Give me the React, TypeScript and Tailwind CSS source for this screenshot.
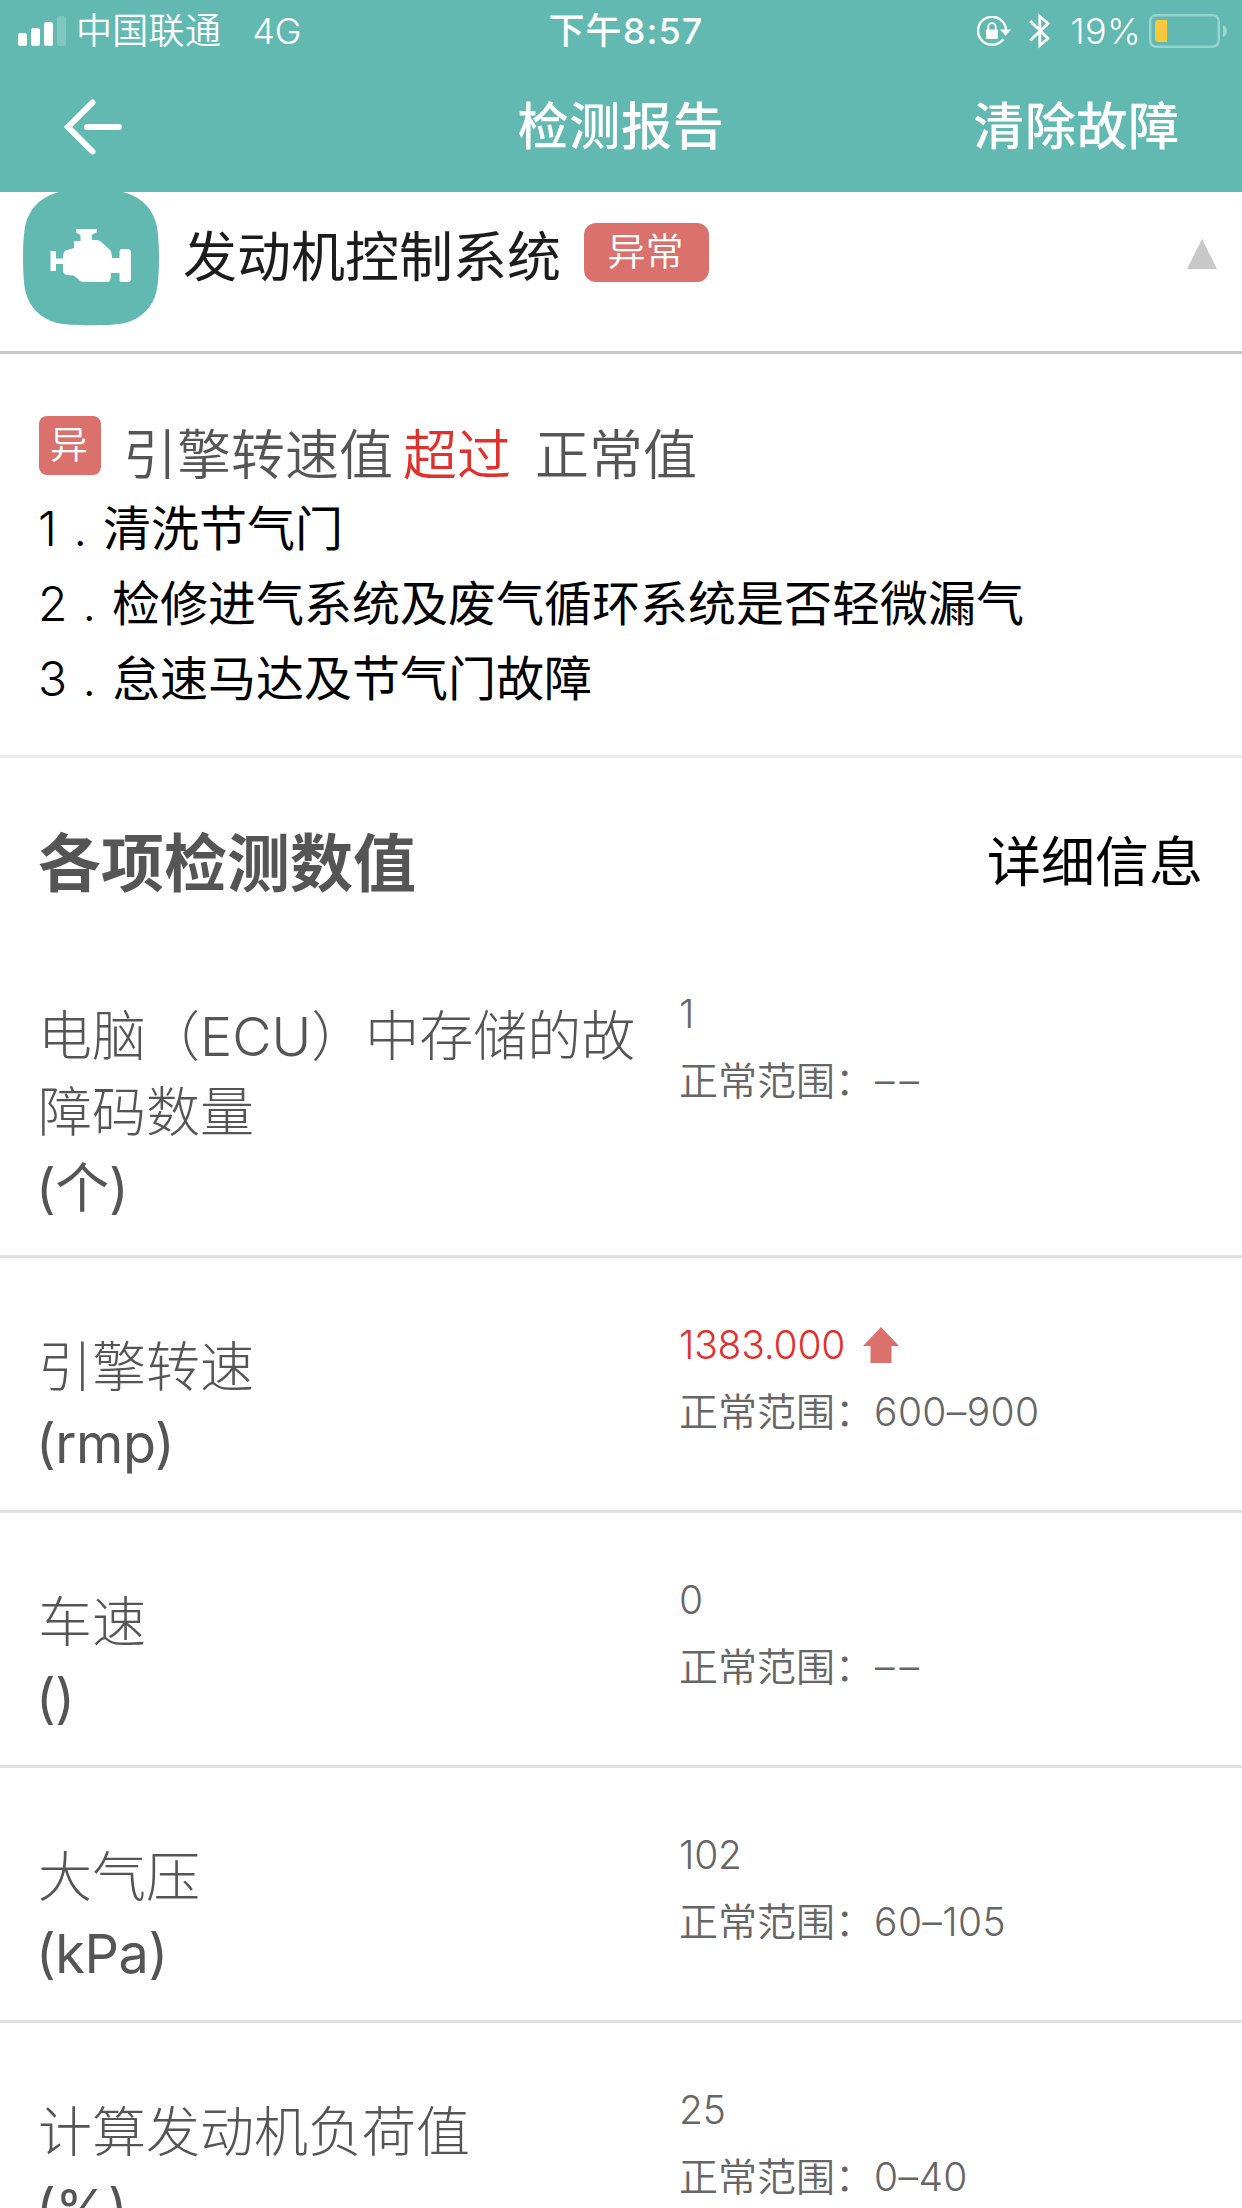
import React from "react";

type Reading = {
  name: string;
  unit: string;
  value: string;
  range: string;
  high?: boolean;
};

const readings: Reading[] = [
  { name: "电脑（ECU）中存储的故障码数量", unit: "(个)", value: "1", range: "––" },
  { name: "引擎转速", unit: "(rmp)", value: "1383.000", range: "600–900", high: true },
  { name: "车速", unit: "()", value: "0", range: "––" },
  { name: "大气压", unit: "(kPa)", value: "102", range: "60–105" },
  { name: "计算发动机负荷值", unit: "(%)", value: "25", range: "0–40" },
];

const advice = [
  { no: "1", text: "清洗节气门", pad: "w-[65px]" },
  { no: "2", text: "检修进气系统及废气循环系统是否轻微漏气", pad: "w-[74px]" },
  { no: "3", text: "怠速马达及节气门故障", pad: "w-[74px]" },
];

function SignalBars() {
  return (
    <svg className="h-[30px] w-12" viewBox="0 0 48 30" fill="#fff">
      <rect x="0" y="17" width="9" height="13" rx="2.5" />
      <rect x="13" y="12" width="9" height="18" rx="2.5" />
      <rect x="26" y="6" width="9" height="24" rx="2.5" />
      <rect x="39" y="0" width="9" height="30" rx="2.5" opacity="0.2" />
    </svg>
  );
}

function RotationLock() {
  return (
    <svg className="h-[30px] w-[34px]" viewBox="0 0 34 30" fill="none">
      <path d="M26.2 23.2A14 14 0 1 1 29 15" stroke="#fff" strokeWidth="2.4" />
      <path d="M23 13.5h11l-5.4 6.2z" fill="#fff" />
      <rect x="9" y="13.5" width="12" height="9.5" rx="1" fill="#fff" />
      <path d="M11.3 14v-3.2a3.7 3.7 0 0 1 7.4 0V14" stroke="#fff" strokeWidth="1.8" />
    </svg>
  );
}

function Bluetooth() {
  return (
    <svg className="h-9 w-[22px]" viewBox="0 0 22 36" fill="none" stroke="#fff" strokeWidth="2.8">
      <path d="M1.200 8 19 25.500 10.800 32.500V3.500L19 10.500 1.200 27.500" />
    </svg>
  );
}

function Battery() {
  return (
    <svg className="h-[34px] w-[78px]" viewBox="0 0 78 34" fill="none">
      <rect x="1.25" y="1.25" width="68.5" height="31.5" rx="6" stroke="#fff" strokeOpacity="0.36" strokeWidth="2.5" />
      <path d="M12 6H9a3 3 0 0 0-3 3v16a3 3 0 0 0 3 3h9V6z" fill="#f9c83c" />
      <path d="M74 11.2c5.2 1.800 5.2 10 0 11.800z" fill="#fff" fillOpacity="0.4" />
    </svg>
  );
}

function EngineIcon() {
  return (
    <svg className="h-[138px] w-[138px]" viewBox="0 0 138 138">
      <path
        d="M35 3.500C46 .500 92 .500 103 3.500c17 5 28 17 31.500 32 3.300 14 3.300 53 0 67-3.500 15-14.500 27-31.500 31.500-11 3-57 3-68 0C18 129.500 7 117.500 3.500 102.500c-3.300-14-3.300-53 0-67C7 20.500 18 8.500 35 3.500Z"
        fill="#61b9b1"
      />
      <path
        d="M54 40H75V43L70 46V51H75Q78 51 80 53.500L88 61Q90 63 90 69H97.500V63Q97.500 60 100 60H106Q109 60.500 109 63V90Q109 93 106 93H99.500Q97.500 93 97.500 91V84H89Q89 93 86 93H61Q58 93 56 90L51.500 86.500 45 86Q41 85 41 82V75H34V82H28.500V62H34V69.500H41Q41 63 43.500 61.500L52 59V52H58.500V46L54 43.500Z"
        fill="#fff"
      />
    </svg>
  );
}

function ReadingRow({ name, unit, value, range, high }: Reading) {
  return (
    <div className="flex border-b-[3px] border-[#e2e2e2] pl-[38px]">
      <div className="w-[641px] shrink-0 pt-[72px] pb-[28px] text-[54px] leading-[76px] text-[#555]">
        <p className="w-[610px] font-light">{name}</p>
        <p className="-ml-[2px] tracking-[-0.4px]">{unit}</p>
      </div>
      <div className="pt-[53px] text-[39px] leading-[67px] font-[350] text-[#666]">
        <div className="flex items-center">
          <span className={high ? "tracking-[-0.2px] text-[#e0322c]" : "tracking-[-0.2px]"}>{value}</span>
          {high && (
            <svg className="mt-px ml-[18px] h-[36px] w-[36px]" viewBox="0 0 36 36" fill="#da716d">
              <path d="M18 0 36 19H28.500V36H7.500V19H0Z" />
            </svg>
          )}
        </div>
        <p>
          正常范围：
          <span className={range === "––" ? "ml-px tracking-[5px]" : "tracking-[0.4px]"}>{range}</span>
        </p>
      </div>
    </div>
  );
}

export default function App() {
  return (
    <div className="flex h-[2208px] w-[1242px] flex-col overflow-hidden bg-white font-['Inter','Noto_Sans_CJK_SC',sans-serif] whitespace-normal">
      <header className="relative z-10 h-48 shrink-0 bg-[#61b9b1] text-white">
        <div className="grid h-[62px] grid-cols-[1fr_auto_1fr] items-center pr-[15px] pl-[18px] text-[35px]">
          <div className="flex items-center">
            <SignalBars />
            <span className="ml-[10px] text-[36px] font-[350] tracking-[0.3px]">中国联通</span>
            <span className="ml-[31px] text-[36px] font-[350]">4G</span>
          </div>
          <span className="pl-[7px] text-[36px] font-medium tracking-[1.1px]">下午8:57</span>
          <div className="flex items-center justify-end">
            <RotationLock />
            <span className="ml-[18px] flex">
              <Bluetooth />
            </span>
            <span className="mr-[8px] ml-[20px] text-[36px] font-[350] tracking-[0.3px]">19%</span>
            <Battery />
          </div>
        </div>
        <div className="grid h-[130px] grid-cols-[1fr_auto_1fr] items-center pr-[62px] pl-[63px] text-[51px] font-medium tracking-[0.7px]">
          <svg className="h-14 w-[60px]" viewBox="0 0 60 56" fill="none" stroke="#fff" strokeWidth="6" strokeLinecap="round">
            <path d="M29.500 3.500 5 28l24.500 24.500" />
            <path d="M24 28h32" />
          </svg>
          <h1 className="-ml-px">检测报告</h1>
          <span className="text-right">清除故障</span>
        </div>
      </header>

      <section className="flex h-[162px] shrink-0 border-b-[3px] border-[#c8c9c9] pr-[25px] pl-[22px]">
        <div className="-mt-[3px]">
          <EngineIcon />
        </div>
        <h2 className="mt-[26px] ml-[23px] text-[54px] leading-[80px] text-[#1c1c1c]">发动机控制系统</h2>
        <span className="mt-[31px] ml-[23px] flex h-[59px] w-[125px] items-center justify-center rounded-[12px] bg-[#da716d] pr-[2px] pb-[2px] text-[38px] font-[350] text-white">
          异常
        </span>
        <svg className="mt-[47px] ml-auto h-[30px] w-[30px]" viewBox="0 0 30 30" fill="#c8c8c8">
          <path d="M15 0 30 30H0Z" />
        </svg>
      </section>

      <section className="h-[404px] shrink-0 border-b-[3px] border-[#ebebeb] pt-[62px] pl-[39px]">
        <div className="flex h-[77px]">
          <span className="flex h-[59px] w-[62px] items-center justify-center rounded-[8px] bg-[#da716d] pr-[2px] pb-[2px] text-[38px] font-[350] text-white">
            异
          </span>
          <p className="flex pt-[2px] pl-[22px] text-[54px] leading-[76px] font-[350] text-[#555]">
            <span>引擎转速值</span>
            <span className="ml-[10px] text-[#e0322c]">超过</span>
            <span className="ml-[24px]">正常值</span>
          </p>
        </div>
        <ol className="mt-[-2px] -ml-px text-[48px] leading-[75px] text-black">
          {advice.map((a) => (
            <li key={a.no} className="flex">
              <span className={`${a.pad} flex pr-[16px] font-[350]`}>
                <span>{a.no}</span>
                <span className="ml-auto">.</span>
              </span>
              <span>{a.text}</span>
            </li>
          ))}
        </ol>
      </section>

      <section className="flex h-[169px] shrink-0 items-center justify-between pt-[40px] pr-[39px] pl-[38px]">
        <h2 className="text-[63px] leading-[90px] font-bold text-[#555]">各项检测数值</h2>
        <span className="text-[54px] leading-[76px] text-black">详细信息</span>
      </section>

      <section>
        {readings.map((r) => (
          <ReadingRow key={r.name} {...r} />
        ))}
      </section>
    </div>
  );
}
